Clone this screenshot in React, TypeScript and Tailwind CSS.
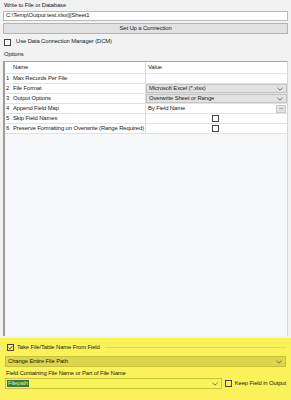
import React from "react";

type Row = { n: number; name: string; kind: "text" | "select" | "field" | "check"; value?: string };

const rows: Row[] = [
  { n: 1, name: "Max Records Per File", kind: "text" },
  { n: 2, name: "File Format", kind: "select", value: "Microsoft Excel (*.xlsx)" },
  { n: 3, name: "Output Options", kind: "select", value: "Overwrite Sheet or Range" },
  { n: 4, name: "Append Field Map", kind: "field", value: "By Field Name" },
  { n: 5, name: "Skip Field Names", kind: "check" },
  { n: 6, name: "Preserve Formatting on Overwrite (Range Required)", kind: "check" },
];

const Chevron = ({ className = "" }: { className?: string }) => (
  <svg width="6" height="4" viewBox="0 0 6 4" className={className}>
    <path d="M0.5 0.8 L3 3.2 L5.5 0.8" fill="none" stroke="#555" strokeWidth="0.8" />
  </svg>
);

const Box = ({ checked = false, bg = "bg-white" }: { checked?: boolean; bg?: string }) => (
  <div className={`w-[7px] h-[7px] border border-[#444] ${bg} flex items-center justify-center shrink-0`}>
    {checked && (
      <svg width="5" height="5" viewBox="0 0 5 5">
        <path d="M0.6 2.6 L2 4 L4.5 0.8" fill="none" stroke="#333" strokeWidth="0.8" />
      </svg>
    )}
  </div>
);

function ValueCell({ row }: { row: Row }) {
  if (row.kind === "select") {
    return (
      <div className="h-full bg-[#e2e2e2] border border-[#c4c4c4] flex items-center justify-between pl-[2px] pr-[3px]">
        <span>{row.value}</span>
        <Chevron />
      </div>
    );
  }
  if (row.kind === "field") {
    return (
      <div className="h-full bg-white flex items-center justify-between pl-[2px] pr-[1px]">
        <span>{row.value}</span>
        <div className="w-[10px] h-[8px] bg-[#e1e1e1] border border-[#c8c8c8] flex items-center justify-center">
          <div className="w-[4px] h-px bg-[#aaa]" />
        </div>
      </div>
    );
  }
  if (row.kind === "check") {
    return (
      <div className="h-full bg-white flex items-center justify-center pr-[3px]">
        <Box />
      </div>
    );
  }
  return <div className="h-full bg-white" />;
}

export default function App() {
  return (
    <div className="w-[291px] h-[400px] overflow-hidden whitespace-nowrap bg-[#f2f2f2] flex flex-col font-['Liberation_Sans',Arial,sans-serif] text-[5.9px] tracking-[-0.12px] leading-none text-[#1a1a1a]">
      <div className="px-[3px] flex flex-col">
        <div className="h-[11px] flex items-center pl-[1px]">Write to File or Database</div>
        <div className="h-[10px] bg-white border border-[#b9b9b9] flex items-center pl-[2px]">C:\Temp\Output test.xlsx|||Sheet1</div>
        <div className="mt-[2px] h-[11px] bg-[#e1e1e1] border border-[#b4b4b4] flex items-center justify-center">Set Up a Connection</div>
        <div className="mt-[4px] h-[8px] flex items-center gap-[5px] pl-[1px]">
          <Box />
          <span>Use Data Connection Manager (DCM)</span>
        </div>
        <div className="mt-[5px] h-[7px] flex items-center pl-[1px]">Options</div>
      </div>

      <div className="mx-[3px] mt-[3px] h-[275px] flex flex-col border-t border-[#a8a8a8] border-l-2 border-l-[#9d9d9d] border-r border-r-[#d6d6d6] bg-[#f6f8fb]">
        <div className="flex h-[11px] bg-white">
          <div className="w-[141px] border-r border-[#dcdcdc] flex items-center pl-[8px]">Name</div>
          <div className="flex-1 flex items-center pl-[2px]">Value</div>
        </div>
        {rows.map((r) => (
          <div key={r.n} className="flex h-[10px] bg-white border-t border-[#e2e2e2]">
            <div className="w-[141px] border-r border-[#dcdcdc] flex items-center overflow-hidden">
              <span className="w-[8px] pl-[1px] shrink-0">{r.n}</span>
              <span>{r.name}</span>
            </div>
            <div className="flex-1">
              <ValueCell row={r} />
            </div>
          </div>
        ))}
        <div className="border-t border-[#e2e2e2]" />
      </div>

      <div className="h-[2px]" />

      <div className="flex-1 bg-[#faf25b] px-[5px] flex flex-col">
        <div className="mt-[5px] h-[9px] flex items-center gap-[3px] pl-[2px]">
          <Box checked bg="bg-[#faf25b]" />
          <span>Take File/Table Name From Field</span>
          <div className="flex-1 h-px bg-[#e4dc50] ml-[2px]" />
        </div>
        <div className="mt-[4px] h-[11px] bg-[#ddd54c] border border-[#c6be46] flex items-center justify-between pl-[2px] pr-[3px]">
          <span>Change Entire File Path</span>
          <Chevron />
        </div>
        <div className="mt-[2px] h-[9px] flex items-center pl-[1px]">Field Containing File Name or Part of File Name</div>
        <div className="h-[11px] flex items-center gap-[3px]">
          <div className="w-[219px] h-full bg-[#faf25b] border border-[#c9c14a] flex items-center justify-between pl-[1px] pr-[3px]">
            <span className="bg-[#2f7d3a] text-[#e8f27a] px-[1px] h-[7px] flex items-center">Filepath</span>
            <Chevron />
          </div>
          <Box bg="bg-[#faf25b]" />
          <span>Keep Field in Output</span>
        </div>
      </div>
    </div>
  );
}
